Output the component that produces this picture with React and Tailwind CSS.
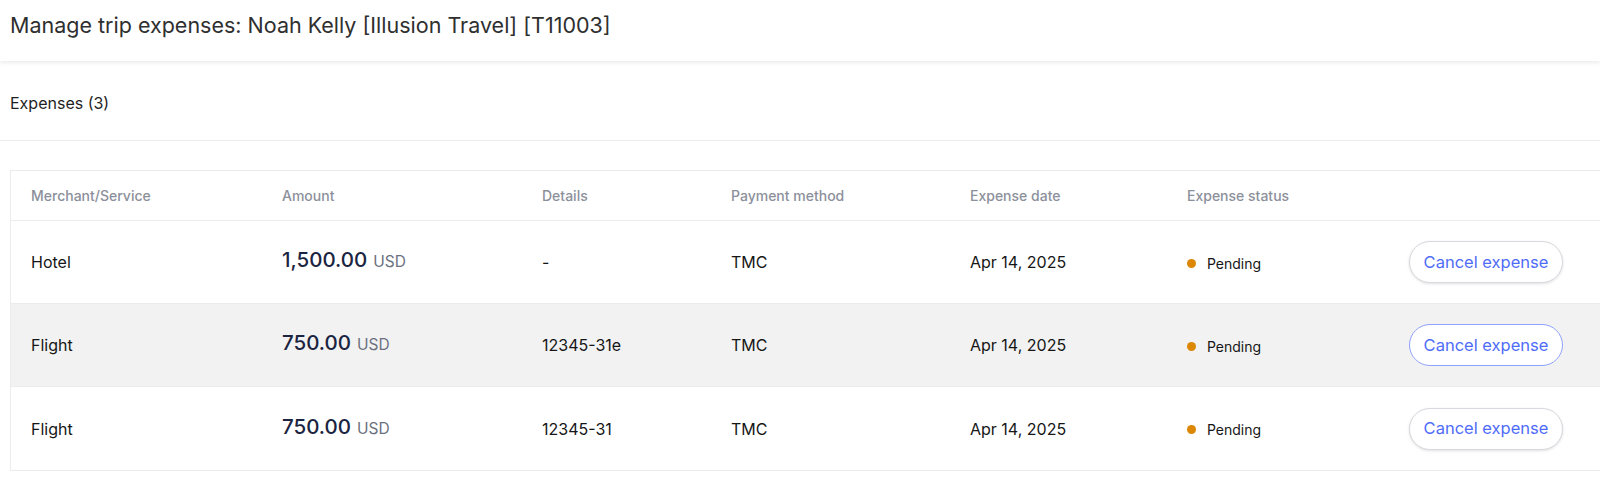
// App.jsx

const rows = [
  { merchant: "Hotel", amount: "1,500.00", details: "-", focus: false, shade: false },
  { merchant: "Flight", amount: "750.00", details: "12345-31e", focus: true, shade: true },
  { merchant: "Flight", amount: "750.00", details: "12345-31", focus: false, shade: false },
];

const cols = "grid grid-cols-[251px_260px_189px_239px_217px_222px_1fr]";

export default function App() {
  return (
    <div className="min-h-screen bg-white font-['Inter',sans-serif] overflow-hidden">

      {/* Page header */}
      <header className="h-[61px] flex items-center px-[10px] bg-white shadow-[0_2px_4px_rgba(0,0,0,0.08)] relative">
        <h1 className="text-[21.5px] text-[#2f2f2f] pb-[10px]">
          Manage trip expenses: Noah Kelly [Illusion Travel] [T11003]
        </h1>
      </header>

      {/* Section title */}
      <div className="h-[80px] flex items-center px-[10px] pt-1 border-b border-[#ececec]">
        <span className="text-[16px] text-[#1f1f1f]">Expenses (3)</span>
      </div>

      {/* Table */}
      <div className="pl-[10px] pt-[29px]">
        <div className="w-[1620px] border border-[#ececec]">
          <div className={`${cols} h-[50px] items-center border-b border-[#ececec] text-[14px] font-medium text-[#8c909b]`}>
            <div className="px-5">Merchant/Service</div>
            <div className="px-5">Amount</div>
            <div className="px-5">Details</div>
            <div className="px-5">Payment method</div>
            <div className="px-5">Expense date</div>
            <div className="px-5">Expense status</div>
            <div></div>
          </div>

          {rows.map((r, i) => (
            <div
              key={i}
              className={`${cols} h-[83px] items-center text-[16px] text-[#161616] ${r.shade ? "bg-[#f2f2f2]" : "bg-white"} ${i < rows.length - 1 ? "border-b border-[#ececec]" : ""}`}
            >
              <div className="px-5">{r.merchant}</div>
              <div className="px-5 pb-[3px]">
                <span className="text-[20.5px] font-medium text-[#1b2440]">{r.amount}</span>
                <span className="text-[15.5px] text-[#6b7080] ml-[6px]">USD</span>
              </div>
              <div className="px-5">{r.details}</div>
              <div className="px-5">TMC</div>
              <div className="px-5">Apr 14, 2025</div>
              <div className="px-5 flex items-center gap-[11px] text-[14px] pt-[2px]">
                <span className="w-[9px] h-[9px] rounded-full bg-[#dc8705]"></span>
                <span>Pending</span>
              </div>
              <div className="pl-5">
                <button
                  className={`h-[42px] w-[154px] rounded-full bg-white text-[16.5px] text-[#4f6cf7] border ${r.focus ? "border-[#8fa2fb]" : "border-[#d8d8de] shadow-[0_1px_3px_rgba(0,0,0,0.12)]"}`}
                >
                  Cancel expense
                </button>
              </div>
            </div>
          ))}
        </div>
      </div>
    </div>
  );
}
